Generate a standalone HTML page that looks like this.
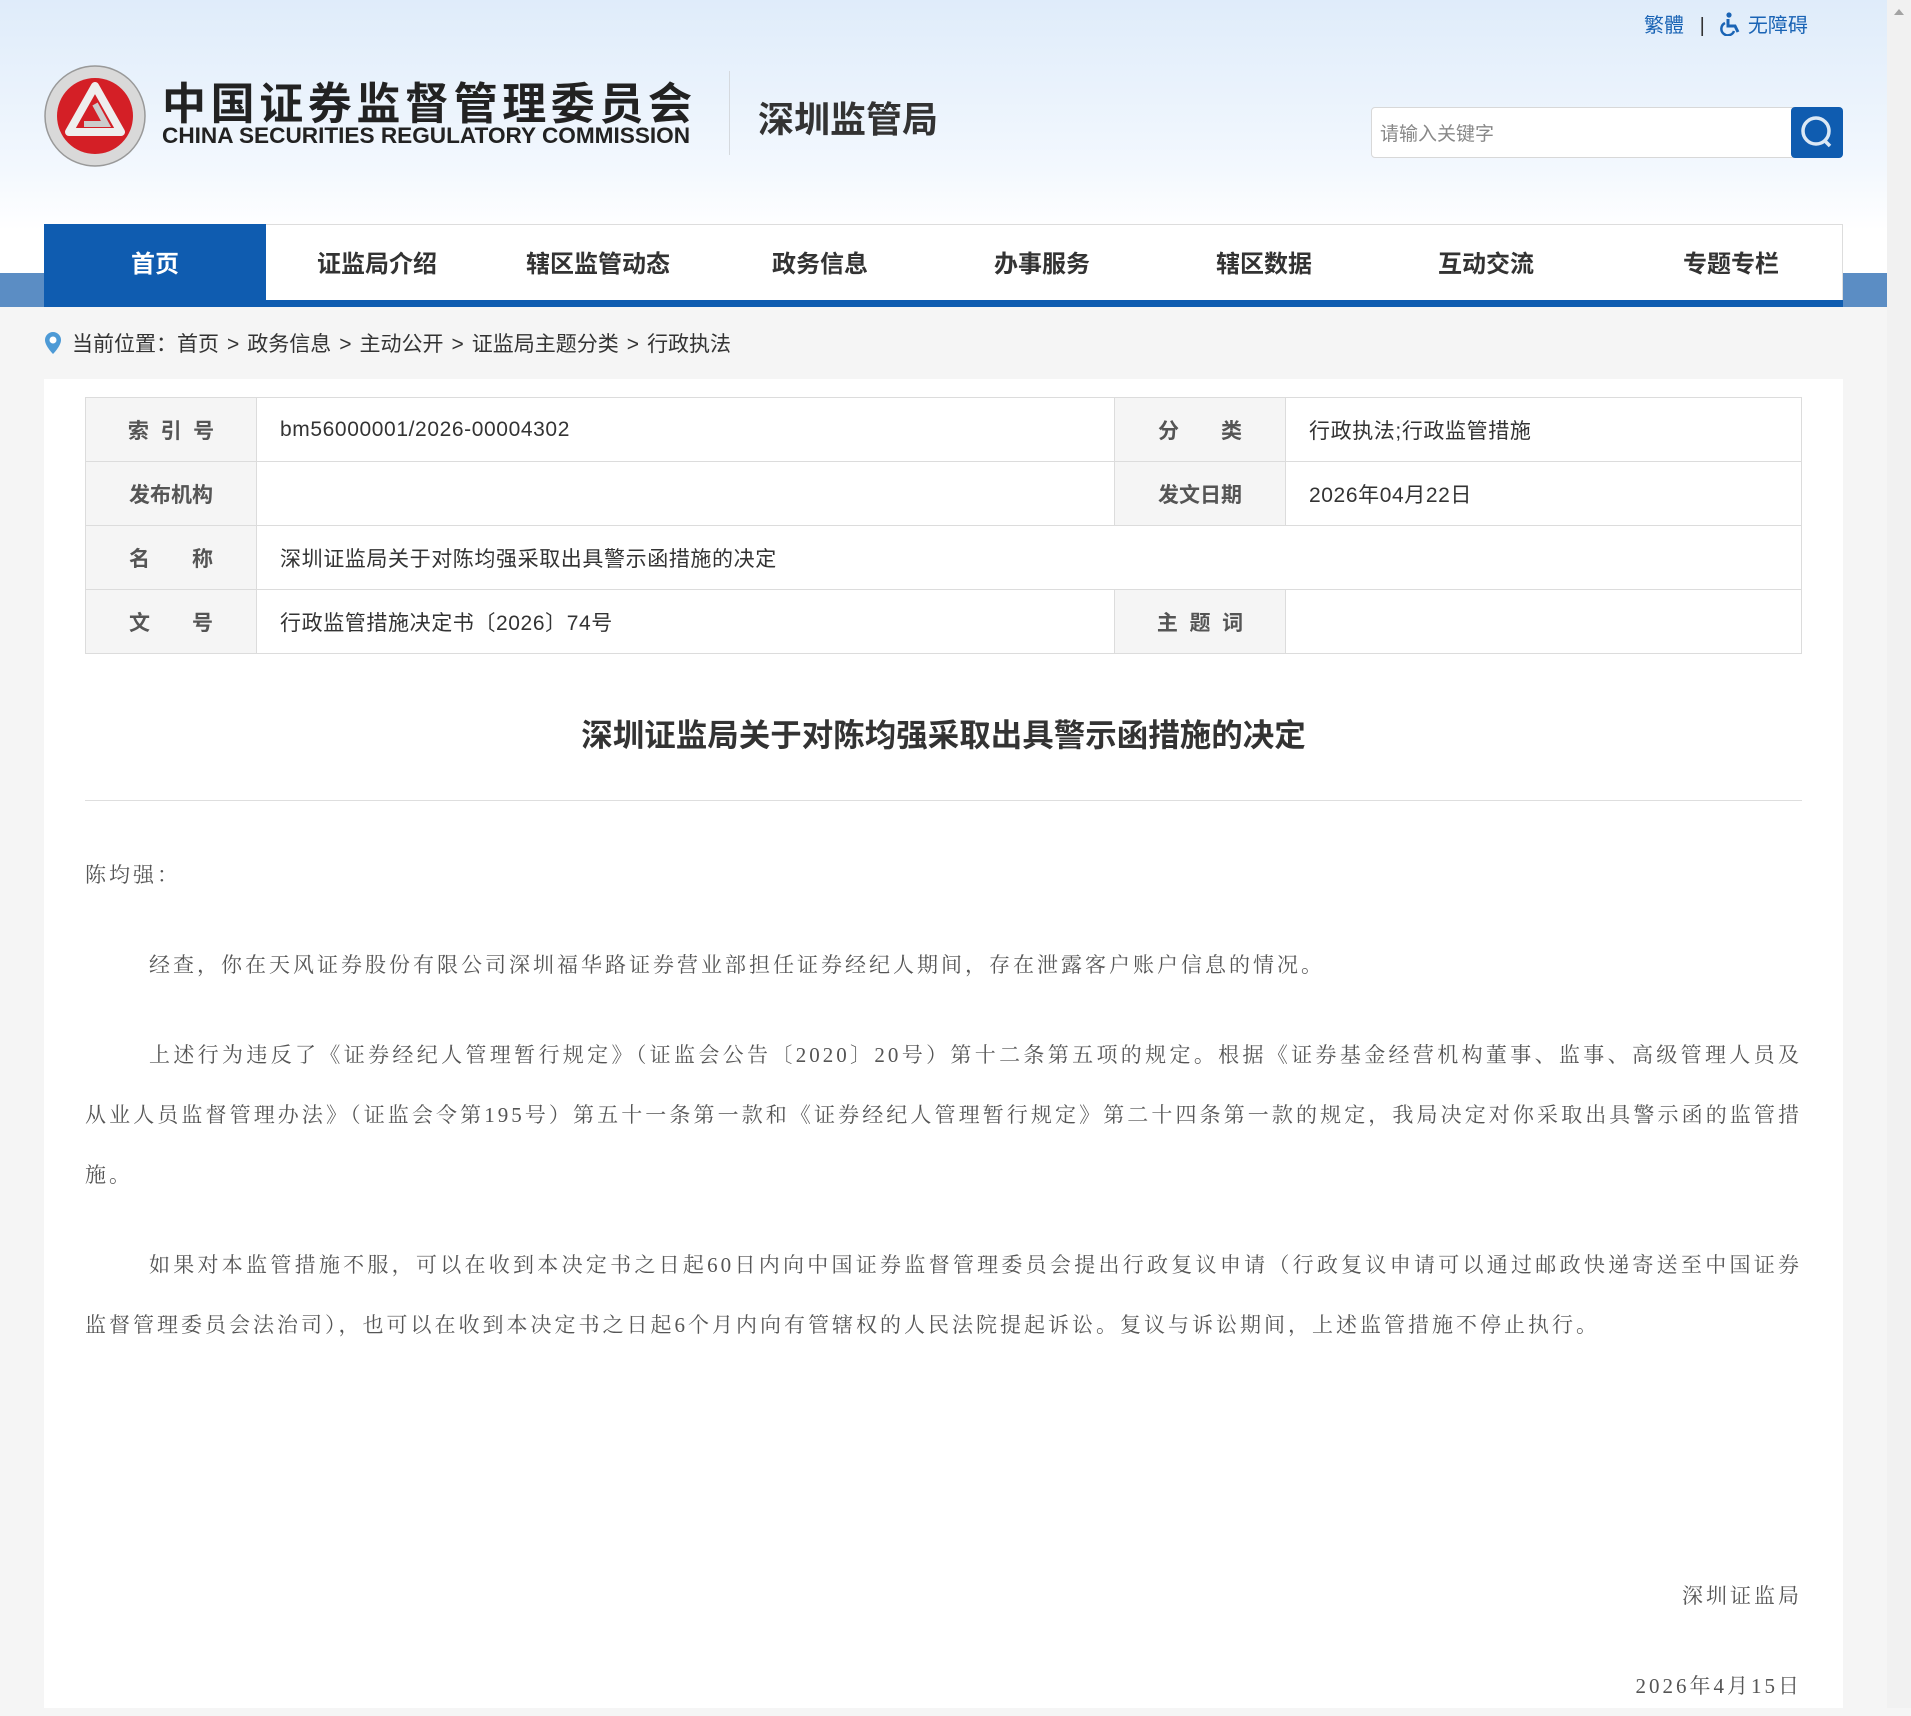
<!DOCTYPE html>
<html><head><meta charset="utf-8">
<style>
*{margin:0;padding:0;box-sizing:border-box}
body{width:1911px;height:1708px;overflow:hidden;background:#f5f5f5;font-family:"Liberation Sans","Noto Sans CJK SC",sans-serif;position:relative}
.hdr{position:absolute;left:0;top:0;width:1887px;height:307px;background:linear-gradient(#dfecfa 0,#f3f8fe 170px,#fff 230px)}
.scroll{position:absolute;right:0;top:0;width:24px;height:1708px;background:#f1f1f1}
.scroll:before{content:"";position:absolute;left:7px;top:9px;border:5px solid transparent;border-bottom:6px solid #a3a3a3;border-top:0}
.top{position:absolute;top:9px;left:1644px;font-size:20px;color:#1a64b5;white-space:nowrap}
.t1{position:absolute;left:162px;top:68px;font-size:44px;font-weight:bold;color:#222;letter-spacing:4.6px;white-space:nowrap}
.t2{position:absolute;left:162px;top:123px;font-size:22.6px;font-weight:bold;color:#222;white-space:nowrap;letter-spacing:0}
.div{position:absolute;left:729px;top:71px;width:1px;height:84px;background:#d5d9de}
.t3{position:absolute;left:758px;top:91px;font-size:36px;font-weight:bold;color:#333;white-space:nowrap}
.search{position:absolute;left:1371px;top:107px;width:425px;height:51px;background:#fff;border:1px solid #d8d8d8;border-radius:4px;font-size:19px;color:#888;padding:11px 8px}
.sbtn{position:absolute;left:1791px;top:107px;width:52px;height:51px;background:#0f5cb0;border-radius:4px}
.band{position:absolute;top:273px;height:34px;background:#5b8dc4}
.nav{position:absolute;left:44px;top:224px;width:1799px;height:83px;background:#fff;border:1px solid #ddd;border-bottom:none}
.navbar{position:absolute;left:44px;top:300px;width:1799px;height:7px;background:#0f5cb0}
.nav span{position:absolute;top:20px;font-size:24px;font-weight:bold;color:#333;transform:translateX(-50%);white-space:nowrap}
.home{position:absolute;left:44px;top:224px;width:222px;height:76px;background:#0f5cb0}
.bc{position:absolute;left:72px;top:328px;font-size:21px;color:#333;white-space:nowrap}
.bc i{font-style:normal;margin:0 8px}
.pin{position:absolute;left:43px;top:331px}
.main{position:absolute;left:44px;top:379px;width:1799px;height:1329px;background:#fff}
table{position:absolute;left:85px;top:397px;width:1717px;border-collapse:collapse}
td{border:1px solid #dcdcdc;height:64px;font-size:21px;color:#333;padding:0 23px;letter-spacing:0.6px}
td.l{background:#f5f5f5;color:#555;font-weight:bold;text-align:center;width:171px;letter-spacing:0}
.title{position:absolute;left:85px;width:1717px;top:710px;text-align:center;font-size:31.5px;font-weight:bold;color:#333}
.hr{position:absolute;left:85px;top:800px;width:1717px;height:1px;background:#dedede}
.body{position:absolute;left:85px;width:1717px;font-family:"Liberation Serif","Noto Serif CJK SC",serif;font-size:21px;letter-spacing:3px;color:#555;line-height:60px;text-align:justify;font-kerning:none}
.body p{text-indent:64px}
</style></head><body>
<div class="hdr"></div>
<div class="scroll"></div>
<div class="top">繁體 <span style="color:#333;margin:0 10px">|</span> <svg width="22" height="24" viewBox="0 0 22 24" style="vertical-align:-4px"><circle cx="9" cy="3" r="2.6" fill="#1a64b5"/><path d="M8 7v7h7l3 6" stroke="#1a64b5" stroke-width="3" fill="none"/><path d="M5 11a6.5 6.5 0 1 0 9 8" stroke="#1a64b5" stroke-width="2.5" fill="none"/></svg> 无障碍</div>
<svg style="position:absolute;left:43px;top:64px" width="104" height="104" viewBox="0 0 104 104">
<circle cx="52" cy="52" r="50" fill="#d9d9d9" stroke="#999" stroke-width="1.5"/>
<circle cx="52" cy="52" r="38" fill="#d41f26"/>
<path d="M52 22 L78 68 H26 Z" fill="none" stroke="#eee" stroke-width="8" stroke-linejoin="round"/>
<path d="M52 40 L63 60 H41" fill="none" stroke="#ccc" stroke-width="6"/>
</svg>
<div class="t1">中国证券监督管理委员会</div>
<div class="t2">CHINA SECURITIES REGULATORY COMMISSION</div>
<div class="div"></div>
<div class="t3">深圳监管局</div>
<div class="search">请输入关键字</div>
<div class="sbtn"><svg width="52" height="51"><circle cx="25" cy="24" r="13" stroke="#dbe8f5" stroke-width="3.5" fill="none"/><path d="M34 34l5 5" stroke="#dbe8f5" stroke-width="3.5"/></svg></div>
<div class="band" style="left:0;width:44px"></div>
<div class="band" style="left:1843px;width:44px"></div>
<div class="nav"></div>
<div class="home"></div>
<div class="navbar"></div>
<div style="position:absolute;left:0;top:224px;width:1887px;height:76px">
<div class="nav" style="left:0;top:0;border:none;background:none;width:1887px">
<span style="left:155px;color:#fff">首页</span><span style="left:377px">证监局介绍</span><span style="left:598px">辖区监管动态</span><span style="left:820px">政务信息</span><span style="left:1042px">办事服务</span><span style="left:1264px">辖区数据</span><span style="left:1486px">互动交流</span><span style="left:1731px">专题专栏</span>
</div></div>
<svg class="pin" width="20" height="24" viewBox="0 0 20 24"><path d="M10 1a8 8 0 0 0-8 8c0 6 8 14 8 14s8-8 8-14a8 8 0 0 0-8-8z" fill="#4d9ad6"/><circle cx="10" cy="9" r="3.5" fill="#fff"/></svg>
<div class="bc">当前位置：首页<i>&gt;</i>政务信息<i>&gt;</i>主动公开<i>&gt;</i>证监局主题分类<i>&gt;</i>行政执法</div>
<div class="main"></div>
<table>
<tr><td class="l">索&nbsp; 引&nbsp; 号</td><td style="width:858px">bm56000001/2026-00004302</td><td class="l">分　　类</td><td>行政执法;行政监管措施</td></tr>
<tr><td class="l">发布机构</td><td></td><td class="l">发文日期</td><td>2026年04月22日</td></tr>
<tr><td class="l">名　　称</td><td colspan="3">深圳证监局关于对陈均强采取出具警示函措施的决定</td></tr>
<tr><td class="l">文　　号</td><td>行政监管措施决定书〔2026〕74号</td><td class="l">主&nbsp; 题&nbsp; 词</td><td></td></tr>
</table>
<div class="title">深圳证监局关于对陈均强采取出具警示函措施的决定</div>
<div class="hr"></div>
<div class="body" style="top:845px">陈均强：</div>
<div class="body" style="top:935px">
<p>经查，你在天风证券股份有限公司深圳福华路证券营业部担任证券经纪人期间，存在泄露客户账户信息的情况。</p>
<p style="margin-top:30px">上述行为违反了《证券经纪人管理暂行规定》（证监会公告〔2020〕20号）第十二条第五项的规定。根据《证券基金经营机构董事、监事、高级管理人员及从业人员监督管理办法》（证监会令第195号）第五十一条第一款和《证券经纪人管理暂行规定》第二十四条第一款的规定，我局决定对你采取出具警示函的监管措施。</p>
<p style="margin-top:30px">如果对本监管措施不服，可以在收到本决定书之日起60日内向中国证券监督管理委员会提出行政复议申请（行政复议申请可以通过邮政快递寄送至中国证券监督管理委员会法治司），也可以在收到本决定书之日起6个月内向有管辖权的人民法院提起诉讼。复议与诉讼期间，上述监管措施不停止执行。</p>
</div>
<div class="body" style="top:1566px;text-align:right">深圳证监局</div>
<div class="body" style="top:1656px;text-align:right">2026年4月15日</div>
</body></html>
